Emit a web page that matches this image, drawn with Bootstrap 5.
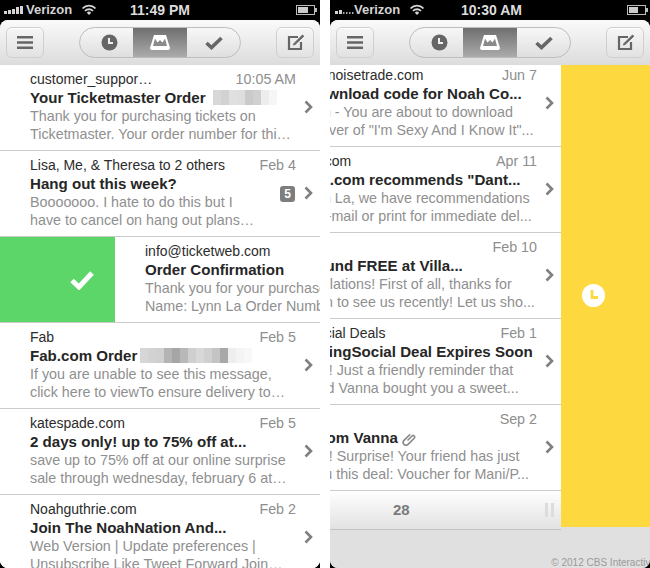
<!DOCTYPE html>
<html lang="en">
<head>
<meta charset="utf-8">
<title>Mailbox</title>
<link href="https://cdn.jsdelivr.net/npm/bootstrap@5.3.0/dist/css/bootstrap.min.css" rel="stylesheet">
<style>
html,body{margin:0;height:568px;width:650px;overflow:hidden;background:#fff;font-family:"Liberation Sans",Arial,sans-serif}
.shots{width:650px;height:568px;gap:10px}
.phone{width:320px;height:568px;background:#000;flex:none}
.statusbar{height:20px;color:#d4d4d4;font-size:13px;font-weight:700;padding:0 4px;position:relative}
.statusbar .clock{position:absolute;top:0;line-height:20px;font-size:14px;color:#ddd}
.statusbar .carrier{position:absolute;top:0;line-height:20px}
.sig{left:4px;top:0}
.appwin{height:548px;border-radius:8px;overflow:hidden;background:#e0e0e0;position:relative}
.tbar{height:45px;background:linear-gradient(#fafafa,#dcdcdc);padding:0 6px;position:relative;z-index:2}
.sqbtn{width:38px;height:31px;padding:0;border:1px solid #cfcfcf;border-radius:6px;background:linear-gradient(#f6f6f6,#e2e2e2);box-shadow:inset 0 1px 0 #fff}
.segs{width:162px;height:31px;border:1px solid #bdbdbd;border-radius:16px;overflow:hidden;background:linear-gradient(#f7f7f7,#dfdfdf)}
.segs .seg{flex:0 0 53px;height:100%}
.segs .seg-first{padding-left:6px}
.segs .seg-on{flex:0 0 54px;background:linear-gradient(#6f6f6f,#ababab)}
.msgs{height:503px;overflow:hidden;background:#fff;position:relative}
.mrow{height:86px;padding:5px 0 0 30px!important;border:0;border-bottom:1px solid #cbcbcb!important;border-radius:0!important;width:320px;flex:none;position:relative;white-space:nowrap;overflow:hidden;background:#fff}
.mtext{font-size:14px;line-height:18px}
.msender{color:#2c2c2c}
.mwhen{position:absolute;right:24px;top:5px;color:#8e8e8e;font-size:14.3px;line-height:18px}
.msubj{font-size:15.1px;line-height:19px;font-weight:700;color:#262626}
.mprev{color:#8f8f8f;font-size:14.3px;line-height:18px}
.chev{position:absolute;right:7px;top:35px}
.cnt{position:absolute;right:25px;top:35px;width:15px;height:16px;border-radius:3px;background:#7d7d7d;color:#fff;font-size:12px;font-weight:700;line-height:16px;text-align:center}
.blurbox{display:inline-flex;vertical-align:-2px;margin-left:7px}
.blurbox span{display:block;width:8px;height:15px}
.swiped{padding:0!important}
.swipegreen{width:115px;flex:none;background:#5cd668;height:85px;padding-right:21px}
.swipebody{padding:5px 0 0 30px;position:relative}
.scrolled{margin-left:-89px;margin-top:-4px;width:320px}
.yellowpane{position:absolute;left:231px;top:45px;width:89px;height:462px;background:#fdd93f;z-index:1;padding:0 0 2px 21px}
.clockdot{width:23px;height:23px}
.pager{height:39px;width:231px;background:linear-gradient(#fff,#e2e2e2);border-bottom:1px solid #c4c4c4;position:relative;color:#7b7b7b;font-weight:700;font-size:15px}
.pgnum{position:absolute;left:63px;top:10px;line-height:18px}
.pgpause{position:absolute;left:215px;top:12px;display:flex;gap:3px}
.pgpause span{display:block;width:3px;height:14px;background:#dcdcdc}
.credit{position:absolute;right:-6px;bottom:0;font-size:10px;line-height:11px;color:#9a9a9a;white-space:nowrap}
</style>
</head>
<body>
<div class="shots d-flex">

  <div class="phone">
    <div class="statusbar">
      <svg width="22" height="20" class="position-absolute sig" aria-hidden="true"><path fill="#d4d4d4" d="M0 11h3v3H0zM4 10h3v4H4zM8 9h3v5H8zM12 7h3v7h-3zM16 6h3v8h-3z"/></svg>
      <span class="carrier" style="left:26px">Verizon</span>
      <svg width="16" height="12" class="position-absolute" style="left:81px;top:4px" aria-hidden="true"><path d="M1.5 4.5a9 9 0 0 1 13 0M4 7a5.5 5.5 0 0 1 8 0" fill="none" stroke="#d4d4d4" stroke-width="1.8"/><path fill="#d4d4d4" d="M8 11 5.8 8.8a3 3 0 0 1 4.4 0z"/></svg>
      <span class="clock" style="left:130px">11:49 PM</span>
      <svg width="22" height="11" class="position-absolute" style="left:296px;top:5px" aria-hidden="true"><rect x=".5" y=".5" width="18" height="9" fill="none" stroke="#bbb"/><rect x="2" y="2" width="10" height="6" fill="#ccc"/><rect x="19" y="3" width="2" height="4" fill="#bbb"/></svg>
    </div>
    <div class="appwin">
      <div class="tbar d-flex align-items-center justify-content-between">
        <button class="btn sqbtn d-flex align-items-center justify-content-center" type="button" aria-label="Menu"><svg width="16" height="13"><path fill="#666" d="M0 0h16v2.4H0zM0 5.3h16v2.4H0zM0 10.6h16V13H0z"/></svg></button>
        <div class="segs d-flex">
          <div class="seg seg-first d-flex align-items-center justify-content-center"><svg width="17" height="17"><circle cx="8.5" cy="8.5" r="8" fill="#666"/><path d="M8 4v5h4" fill="none" stroke="#f0f0f0" stroke-width="2"/></svg></div>
          <div class="seg seg-on d-flex align-items-center justify-content-center"><svg width="20" height="15"><path fill="#fff" d="M4 0h12l4 13a2 2 0 0 1-2 2H2a2 2 0 0 1-2-2z"/><path fill="#8a8a8a" d="M5 3.5 7.5 7.5 10 5l2.5 2.5L15 3.5 17 11H3z"/></svg></div>
          <div class="seg d-flex align-items-center justify-content-center"><svg width="18" height="14"><path d="M1.5 7 6.5 11.5 16.5 2" fill="none" stroke="#666" stroke-width="3.6"/></svg></div>
        </div>
        <button class="btn sqbtn d-flex align-items-center justify-content-center" type="button" aria-label="Compose"><svg width="17" height="17"><path d="M11 3H2v12h12V8" fill="none" stroke="#666" stroke-width="2.2"/><path d="M15.5 1 7 9.5 6.5 11 8 10.5 16.8 2.2z" fill="#666" stroke="#666"/></svg></button>
      </div>
      <div class="msgs list-group list-group-flush">
        <div class="list-group-item mrow">
          <div class="mtext msender">customer_suppor…</div><span class="mwhen">10:05 AM</span>
          <div class="msubj">Your Ticketmaster Order<span class="blurbox"><span style="background:#d8d8d8"></span><span style="background:#d2d2d2"></span><span style="background:#e0e0e0"></span><span style="background:#dedede"></span><span style="background:#cacaca"></span><span style="background:#d0d0d0"></span><span style="background:#ededed"></span><span style="background:#f6f6f6"></span></span></div>
          <div class="mprev">Thank you for purchasing tickets on</div>
          <div class="mprev">Ticketmaster. Your order number for thi…</div>
          <svg class="chev" width="9" height="14"><path d="M1.5 1.5 7 7l-5.5 5.5" fill="none" stroke="#7f7f7f" stroke-width="2.6"/></svg>
        </div>
        <div class="list-group-item mrow">
          <div class="mtext msender">Lisa, Me, &amp; Theresa to 2 others</div><span class="mwhen">Feb 4</span>
          <div class="msubj">Hang out this week?</div>
          <div class="mprev">Booooooo. I hate to do this but I</div>
          <div class="mprev">have to cancel on hang out plans…</div>
          <span class="cnt">5</span>
          <svg class="chev" width="9" height="14"><path d="M1.5 1.5 7 7l-5.5 5.5" fill="none" stroke="#7f7f7f" stroke-width="2.6"/></svg>
        </div>
        <div class="list-group-item mrow swiped d-flex">
          <div class="swipegreen d-flex align-items-center justify-content-end"><svg width="24" height="20"><path d="M2 10.5 9 17 22 3" fill="none" stroke="#fff" stroke-width="5"/></svg></div>
          <div class="swipebody">
            <div class="mtext msender">info@ticketweb.com</div>
            <div class="msubj">Order Confirmation</div>
            <div class="mprev">Thank you for your purchase</div>
            <div class="mprev">Name: Lynn La Order Number</div>
          </div>
        </div>
        <div class="list-group-item mrow">
          <div class="mtext msender">Fab</div><span class="mwhen">Feb 5</span>
          <div class="msubj">Fab.com Order<span class="blurbox" style="margin-left:3px"><span style="background:#d6d6d6"></span><span style="background:#d2d2d2"></span><span style="background:#d0d0d0"></span><span style="background:#b4b4b4"></span><span style="background:#a6a6a6"></span><span style="background:#b8b8b8"></span><span style="background:#cfcfcf"></span><span style="background:#d8d8d8"></span><span style="background:#d0d0d0"></span><span style="background:#c4c4c4"></span><span style="background:#a8a8a8"></span><span style="background:#eee"></span><span style="background:#f4f4f4"></span><span style="background:#f8f8f8"></span></span></div>
          <div class="mprev">If you are unable to see this message,</div>
          <div class="mprev">click here to viewTo ensure delivery to…</div>
          <svg class="chev" width="9" height="14"><path d="M1.5 1.5 7 7l-5.5 5.5" fill="none" stroke="#7f7f7f" stroke-width="2.6"/></svg>
        </div>
        <div class="list-group-item mrow">
          <div class="mtext msender">katespade.com</div><span class="mwhen">Feb 5</span>
          <div class="msubj">2 days only! up to 75% off at...</div>
          <div class="mprev">save up to 75% off at our online surprise</div>
          <div class="mprev">sale through wednesday, february 6 at…</div>
          <svg class="chev" width="9" height="14"><path d="M1.5 1.5 7 7l-5.5 5.5" fill="none" stroke="#7f7f7f" stroke-width="2.6"/></svg>
        </div>
        <div class="list-group-item mrow">
          <div class="mtext msender">Noahguthrie.com</div><span class="mwhen">Feb 2</span>
          <div class="msubj">Join The NoahNation And...</div>
          <div class="mprev">Web Version | Update preferences |</div>
          <div class="mprev">Unsubscribe Like Tweet Forward Join…</div>
          <svg class="chev" width="9" height="14"><path d="M1.5 1.5 7 7l-5.5 5.5" fill="none" stroke="#7f7f7f" stroke-width="2.6"/></svg>
        </div>
      </div>
    </div>
  </div>

  <div class="phone">
    <div class="statusbar">
      <svg width="22" height="20" class="position-absolute sig" aria-hidden="true"><path fill="#d4d4d4" d="M1 11h3v3H1zM5 10h3v4H5z"/><path fill="#aaa" d="M9 12h1.5v2H9zM12 12h1.5v2H12zM15 12h1.5v2H15zM18 12h1.5v2H18z"/></svg>
      <span class="carrier" style="left:24px">Verizon</span>
      <svg width="16" height="12" class="position-absolute" style="left:79px;top:4px" aria-hidden="true"><path d="M1.5 4.5a9 9 0 0 1 13 0M4 7a5.5 5.5 0 0 1 8 0" fill="none" stroke="#d4d4d4" stroke-width="1.8"/><path fill="#d4d4d4" d="M8 11 5.8 8.8a3 3 0 0 1 4.4 0z"/></svg>
      <span class="clock" style="left:131px">10:30 AM</span>
      <svg width="22" height="11" class="position-absolute" style="left:297px;top:5px" aria-hidden="true"><rect x=".5" y=".5" width="18" height="9" fill="none" stroke="#bbb"/><rect x="2" y="2" width="9" height="6" fill="#ccc"/><rect x="19" y="3" width="2" height="4" fill="#bbb"/></svg>
    </div>
    <div class="appwin">
      <div class="tbar d-flex align-items-center justify-content-between">
        <button class="btn sqbtn d-flex align-items-center justify-content-center" type="button" aria-label="Menu"><svg width="16" height="13"><path fill="#666" d="M0 0h16v2.4H0zM0 5.3h16v2.4H0zM0 10.6h16V13H0z"/></svg></button>
        <div class="segs d-flex">
          <div class="seg seg-first d-flex align-items-center justify-content-center"><svg width="17" height="17"><circle cx="8.5" cy="8.5" r="8" fill="#666"/><path d="M8 4v5h4" fill="none" stroke="#f0f0f0" stroke-width="2"/></svg></div>
          <div class="seg seg-on d-flex align-items-center justify-content-center"><svg width="20" height="15"><path fill="#fff" d="M4 0h12l4 13a2 2 0 0 1-2 2H2a2 2 0 0 1-2-2z"/><path fill="#8a8a8a" d="M5 3.5 7.5 7.5 10 5l2.5 2.5L15 3.5 17 11H3z"/></svg></div>
          <div class="seg d-flex align-items-center justify-content-center"><svg width="18" height="14"><path d="M1.5 7 6.5 11.5 16.5 2" fill="none" stroke="#666" stroke-width="3.6"/></svg></div>
        </div>
        <button class="btn sqbtn d-flex align-items-center justify-content-center" type="button" aria-label="Compose"><svg width="17" height="17"><path d="M11 3H2v12h12V8" fill="none" stroke="#666" stroke-width="2.2"/><path d="M15.5 1 7 9.5 6.5 11 8 10.5 16.8 2.2z" fill="#666" stroke="#666"/></svg></button>
      </div>
      <div class="yellowpane d-flex align-items-center justify-content-start"><svg class="clockdot" viewBox="0 0 23 23"><circle cx="11.5" cy="11.5" r="11.5" fill="#fff"/><path d="M10 6v7.5h6" fill="none" stroke="#fdd93f" stroke-width="2.8"/></svg></div>
      <div class="msgs" style="background:#e0e0e0">
        <div class="scrolled list-group list-group-flush">
          <div class="list-group-item mrow">
            <div class="mtext msender">offers1@noisetrade.com</div><span class="mwhen">Jun 7</span>
            <div class="msubj">Free Download code for Noah Co...</div>
            <div class="mprev">Hey Lynn - You are about to download</div>
            <div class="mprev">album cover of "I'm Sexy And I Know It"...</div>
            <svg class="chev" width="9" height="14"><path d="M1.5 1.5 7 7l-5.5 5.5" fill="none" stroke="#7f7f7f" stroke-width="2.6"/></svg>
          </div>
          <div class="list-group-item mrow">
            <div class="mtext msender">amazon.com</div><span class="mwhen">Apr 11</span>
            <div class="msubj">Amazon.com recommends "Dant...</div>
            <div class="mprev">Hey Lynn La, we have recommendations</div>
            <div class="mprev">Please e-mail or print for immediate del...</div>
            <svg class="chev" width="9" height="14"><path d="M1.5 1.5 7 7l-5.5 5.5" fill="none" stroke="#7f7f7f" stroke-width="2.6"/></svg>
          </div>
          <div class="list-group-item mrow">
            <div class="mtext msender">Villa</div><span class="mwhen">Feb 10</span>
            <div class="msubj">Deal Found FREE at Villa...</div>
            <div class="mprev">Congratulations! First of all, thanks for</div>
            <div class="mprev">Thanks in to see us recently! Let us sho...</div>
            <svg class="chev" width="9" height="14"><path d="M1.5 1.5 7 7l-5.5 5.5" fill="none" stroke="#7f7f7f" stroke-width="2.6"/></svg>
          </div>
          <div class="list-group-item mrow">
            <div class="mtext msender">LivingSocial Deals</div><span class="mwhen">Feb 1</span>
            <div class="msubj">Now LivingSocial Deal Expires Soon</div>
            <div class="mprev">Hi Vanna! Just a friendly reminder that</div>
            <div class="mprev">Our friend Vanna bought you a sweet...</div>
            <svg class="chev" width="9" height="14"><path d="M1.5 1.5 7 7l-5.5 5.5" fill="none" stroke="#7f7f7f" stroke-width="2.6"/></svg>
          </div>
          <div class="list-group-item mrow">
            <span class="mwhen">Sep 2</span>
            <div class="mtext msender">&nbsp;</div>
            <div class="msubj">A Gift from Vanna <svg width="14" height="14" viewBox="0 0 14 14"><path d="M5.5 8.5 10 4a1.5 1.5 0 0 1 2.2 2.2L6 12.4a2.8 2.8 0 0 1-4-4L8.2 2.2" fill="none" stroke="#888" stroke-width="1.6"/></svg></div>
            <div class="mprev">Hi Vanna! Surprise! Your friend has just</div>
            <div class="mprev">given you this deal: Voucher for Mani/P...</div>
            <svg class="chev" width="9" height="14"><path d="M1.5 1.5 7 7l-5.5 5.5" fill="none" stroke="#7f7f7f" stroke-width="2.6"/></svg>
          </div>
        </div>
        <div class="pager"><span class="pgnum">28</span><span class="pgpause"><span></span><span></span></span></div>
      </div>
      <div class="credit">© 2012 CBS Interactive</div>
    </div>
  </div>
</div>
<script src="https://cdn.jsdelivr.net/npm/bootstrap@5.3.0/dist/js/bootstrap.bundle.min.js"></script>
</body>
</html>
